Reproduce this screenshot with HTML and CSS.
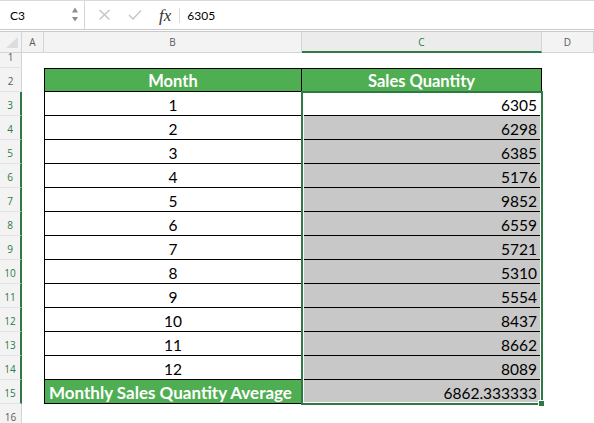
FILE: index.html
```html
<!DOCTYPE html>
<html>
<head>
    <link rel="stylesheet" href="styles.css">
</head>
<body>
    <div class="formula-bar">
        <div class="name-box">
            <span>C3</span>
            <svg class="spinner" width="8" height="16" viewBox="0 0 8 16">
                <polygon points="1,5.5 7,5.5 4,0.5" />
                <polygon points="1,10 7,10 4,14.5" />
            </svg>
        </div>
        <svg class="tool" width="14" height="12" viewBox="0 0 14 12">
            <path d="M1.5 1 L11.5 10.5 M11.5 1 L1.5 10.5" />
        </svg>
        <svg class="tool ok" width="14" height="12" viewBox="0 0 14 12">
            <path d="M1 6 L5 10 L13 1.5" />
        </svg>
        <span class="fx">fx</span>
        <div class="formula">6305</div>
    </div>

    <div class="sheet">
        <div class="corner">
            <svg width="14" height="13" viewBox="0 0 14 13"><polygon points="1,12 13,12 13,1" /></svg>
        </div>
        <div class="col-head">A</div>
        <div class="col-head">B</div>
        <div class="col-head active">C</div>
        <div class="col-head">D</div>

        <div class="row-head">1</div><div></div><div></div><div></div><div></div>

        <div class="row-head">2</div><div></div>
        <div class="cell head first-row first-col">Month</div>
        <div class="cell head first-row">Sales Quantity</div><div></div>

        <div class="row-head sel">3</div><div></div>
        <div class="cell first-col">1</div>
        <div class="cell num current">6305
            <div class="selection"><span class="handle"></span></div>
        </div><div></div>

        <div class="row-head sel">4</div><div></div>
        <div class="cell first-col">2</div><div class="cell num">6298</div><div></div>
        <div class="row-head sel">5</div><div></div>
        <div class="cell first-col">3</div><div class="cell num">6385</div><div></div>
        <div class="row-head sel">6</div><div></div>
        <div class="cell first-col">4</div><div class="cell num">5176</div><div></div>
        <div class="row-head sel">7</div><div></div>
        <div class="cell first-col">5</div><div class="cell num">9852</div><div></div>
        <div class="row-head sel">8</div><div></div>
        <div class="cell first-col">6</div><div class="cell num">6559</div><div></div>
        <div class="row-head sel">9</div><div></div>
        <div class="cell first-col">7</div><div class="cell num">5721</div><div></div>
        <div class="row-head sel">10</div><div></div>
        <div class="cell first-col">8</div><div class="cell num">5310</div><div></div>
        <div class="row-head sel">11</div><div></div>
        <div class="cell first-col">9</div><div class="cell num">5554</div><div></div>
        <div class="row-head sel">12</div><div></div>
        <div class="cell first-col">10</div><div class="cell num">8437</div><div></div>
        <div class="row-head sel">13</div><div></div>
        <div class="cell first-col">11</div><div class="cell num">8662</div><div></div>
        <div class="row-head sel">14</div><div></div>
        <div class="cell first-col">12</div><div class="cell num">8089</div><div></div>
        <div class="row-head sel">15</div><div></div>
        <div class="cell head first-col total">Monthly Sales Quantity Average</div>
        <div class="cell num">6862.333333</div><div></div>

        <div class="row-head">16</div><div></div><div></div><div></div><div></div>
    </div>
</body>
</html>
```

FILE: styles.css
```css
/* Page */
body, html {
    margin: 0;
    padding: 0;
    background: #fff;
    overflow: hidden;
}
body {
    font-family: Lato, "Open Sans", sans-serif;
    color: #000;
}

/* Formula bar */
.formula-bar {
    display: flex;
    align-items: center;
    height: 28px;
    border-top: 1px solid #dadada;
    border-bottom: 3px double #c9c9c9;
    font-size: 12px;
}
.name-box {
    display: flex; align-items: center; justify-content: space-between;
    box-sizing: border-box;
    width: 85px; height: 100%;
    padding: 0 5px 0 10px;
    border-right: 1px solid #d6d6d6;
}
.spinner polygon { fill: #8c8c8c; }
.tool { margin-left: 13px; flex-shrink: 0; }
.tool.ok { margin-left: 16px; }
.tool path {
    fill: none;
    stroke: #c3c3c3;
    stroke-width: 1.3;
}
.fx {
    font-family: "Liberation Serif", serif;
    font-style: italic;
    font-size: 17px;
    margin-left: 17px;
    padding-right: 8px;
    border-right: 1px solid #dcdcdc;
    line-height: 15px;
    color: #333;
}
.formula { padding-left: 7px; }

/* Sheet grid */
.sheet {
    display: grid;
    grid-template-columns: 22px 22px 258px 240px 1fr;
    grid-template-rows: 21px 15px repeat(15, 24px);
}
.corner, .col-head {
    background: #f3f3f3;
    border-right: 1px solid #d4d4d4;
    border-bottom: 1px solid #d4d4d4;
    box-sizing: border-box;
}
.corner { display: flex; align-items: flex-end; justify-content: flex-end; padding: 0 2px 3px 0; }
.corner polygon { fill: #dddddd; }
.col-head {
    display: flex; align-items: center; justify-content: center;
    font-size: 10px;
    color: #5c5c5c;
    font-family: "Open Sans", sans-serif;
}
.col-head.active {
    background: #ececec;
    color: #2d7a47;
    border-bottom: 2px solid #2d7a47;
}
.row-head {
    display: flex; align-items: flex-end; justify-content: center;
    padding-bottom: 3px;
    box-sizing: border-box;
    background: #f3f3f3;
    border-right: 1px solid #d4d4d4;
    border-bottom: 1px solid #e2e2e2;
    font-size: 10px;
    color: #5c5c5c;
    font-family: "Open Sans", sans-serif;
}
.row-head.sel {
    color: #2d7a47;
    border-right: 2px solid #2d7a47;
}

/* Data table */
.cell {
    display: flex; align-items: center; justify-content: center;
    box-sizing: border-box;
    padding-top: 2px;
    border-right: 1px solid #000;
    border-bottom: 1px solid #000;
    font-size: 15.5px;
    white-space: nowrap;
}
.cell.first-row { border-top: 1px solid #000; }
.cell.first-col { border-left: 1px solid #000; }
.cell.head {
    background: #4fae52;
    color: #fff;
    font-weight: bold;
    font-size: 16.5px;
}
.cell.total {
    justify-content: flex-start;
    padding-left: 4px;
    font-size: 17px;
}
.cell.num {
    justify-content: flex-end;
    padding-right: 4px;
    background: #c8c8c8;
}
.cell.current {
    background: #fff;
    position: relative;
}

/* Selection C3:C15 */
.selection {
    position: absolute;
    top: -1px; left: -1px; right: -2px;
    height: 314px;
    box-sizing: border-box;
    border: 2px solid #2d7a47;
    box-shadow: inset 0 0 0 1px #fff;
    pointer-events: none;
}
.handle {
    position: absolute;
    right: -4px; bottom: -4px;
    width: 5px; height: 5px;
    background: #2d7a47;
    border: 1px solid #fff;
}
```
